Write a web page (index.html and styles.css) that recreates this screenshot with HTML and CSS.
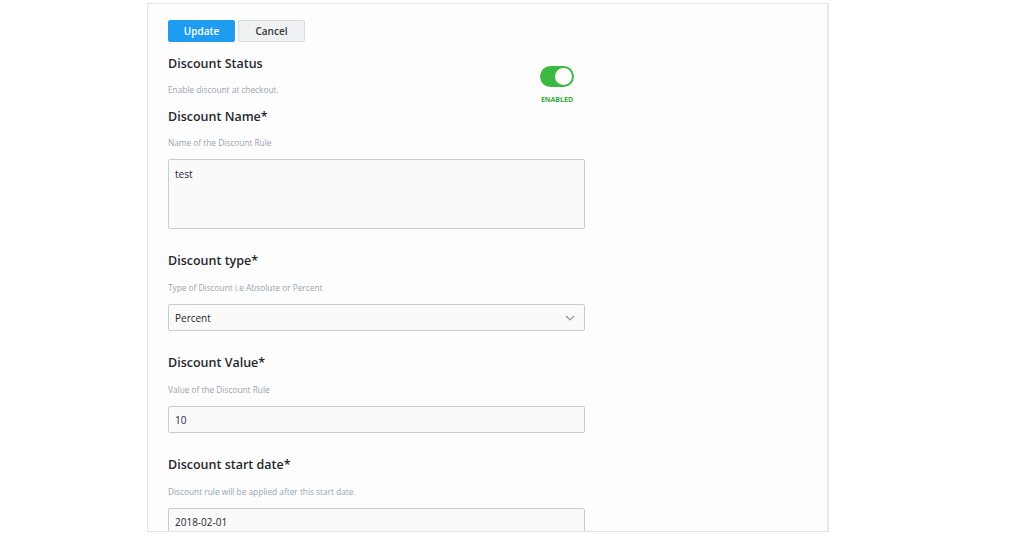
FILE: index.html
```html
<!DOCTYPE html>
<html lang="en">
<head>
  <meta charset="UTF-8">
  <meta name="viewport" content="width=device-width, initial-scale=1.0">
  <title>Edit Discount</title>
  <link rel="stylesheet" href="styles.css">
</head>
<body>
  <div class="panel">
    <div class="actions">
      <button class="btn btn-primary">Update</button>
      <button class="btn btn-default">Cancel</button>
    </div>

    <form class="form">
      <div class="status-row">
        <div>
          <h3 class="field-title">Discount Status</h3>
          <p class="field-help">Enable discount at checkout.</p>
        </div>
        <div class="toggle-box">
          <span class="toggle"><span class="knob"></span></span>
          <span class="toggle-label">ENABLED</span>
        </div>
      </div>

      <div class="field first">
        <h3 class="field-title">Discount Name*</h3>
        <p class="field-help">Name of the Discount Rule</p>
        <div class="control textarea">test</div>
      </div>

      <div class="field">
        <h3 class="field-title">Discount type*</h3>
        <p class="field-help">Type of Discount i.e Absolute or Percent</p>
        <div class="control select">
          <span>Percent</span>
          <svg class="chevron" width="10" height="6" viewBox="0 0 10 6">
            <path d="M1 1 L5 5 L9 1" fill="none" stroke="#8a939c" stroke-width="1.1"/>
          </svg>
        </div>
      </div>

      <div class="field">
        <h3 class="field-title">Discount Value*</h3>
        <p class="field-help">Value of the Discount Rule</p>
        <div class="control">10</div>
      </div>

      <div class="field">
        <h3 class="field-title">Discount start date*</h3>
        <p class="field-help">Discount rule will be applied after this start date.</p>
        <div class="control">2018-02-01</div>
      </div>
    </form>
  </div>
</body>
</html>
```

FILE: styles.css
```css
body {
  font-family: "Open Sans", Arial, sans-serif;
  margin: 0;
  padding: 0;
  background: #ffffff;
  color: #2b2f33;
  overflow: hidden;
}

/* Panel */
.panel {
  margin: 3px 0 0 147px;
  width: 659px;
  height: 511px;
  padding: 16px 0 0 20px;
  background: #fdfdfd;
  border: 1px solid #e4e4e4;
  box-shadow: 1px 0 1px #ececec;
  overflow: hidden;
}

.actions {
  display: flex;
  gap: 3px;
}

.btn {
  font-family: "Open Sans", Arial, sans-serif;
  font-size: 10px;
  font-weight: 600;
  width: 67px;
  height: 22px;
  padding: 0;
  border-radius: 2px;
  cursor: pointer;
}

.btn-primary {
  background: #1e9cf0;
  border: 1px solid #1e9cf0;
  color: #ffffff;
}

.btn-default {
  background: #eff1f3;
  border: 1px solid #d9dcdf;
  color: #33383d;
}

/* Form */
.form {
  width: 417px;
  margin-top: 12px;
}

.status-row {
  display: flex;
  justify-content: space-between;
  padding-right: 11px;
}

.field-title {
  margin: 0;
  font-size: 12.5px;
  font-weight: 600;
  line-height: 20px;
  color: #25292d;
}

.field-help {
  margin: 10px 0 0;
  font-size: 8.3px;
  line-height: 12px;
  color: #9aa4ae;
}

.field .field-help {
  margin: 11px 0 10px;
}

.field.first .field-help {
  margin: 10px 0 10px;
}

.toggle-box {
  display: flex;
  flex-direction: column;
  align-items: center;
  margin-top: 12px;
}

.toggle {
  display: flex;
  justify-content: flex-end;
  align-items: center;
  width: 34px;
  height: 21px;
  padding: 0 2px;
  box-sizing: border-box;
  background: #3db843;
  border-radius: 11px;
}

.knob {
  width: 17px;
  height: 17px;
  border-radius: 50%;
  background: #ffffff;
}

.toggle-label {
  margin-top: 8px;
  font-size: 7px;
  font-weight: 700;
  line-height: 10px;
  color: #3aa83f;
}

.field {
  margin-top: 22px;
}

.field.first {
  margin-top: 2px;
}

.control {
  display: flex;
  align-items: center;
  height: 25px;
  padding: 0 6px;
  background: #fafafa;
  border: 1px solid #c9cdd1;
  border-radius: 2px;
  font-size: 10px;
  color: #24282c;
}

.control.textarea {
  align-items: flex-start;
  height: 61px;
  padding-top: 7px;
}

.control.select {
  justify-content: space-between;
  padding-right: 9px;
}
```
